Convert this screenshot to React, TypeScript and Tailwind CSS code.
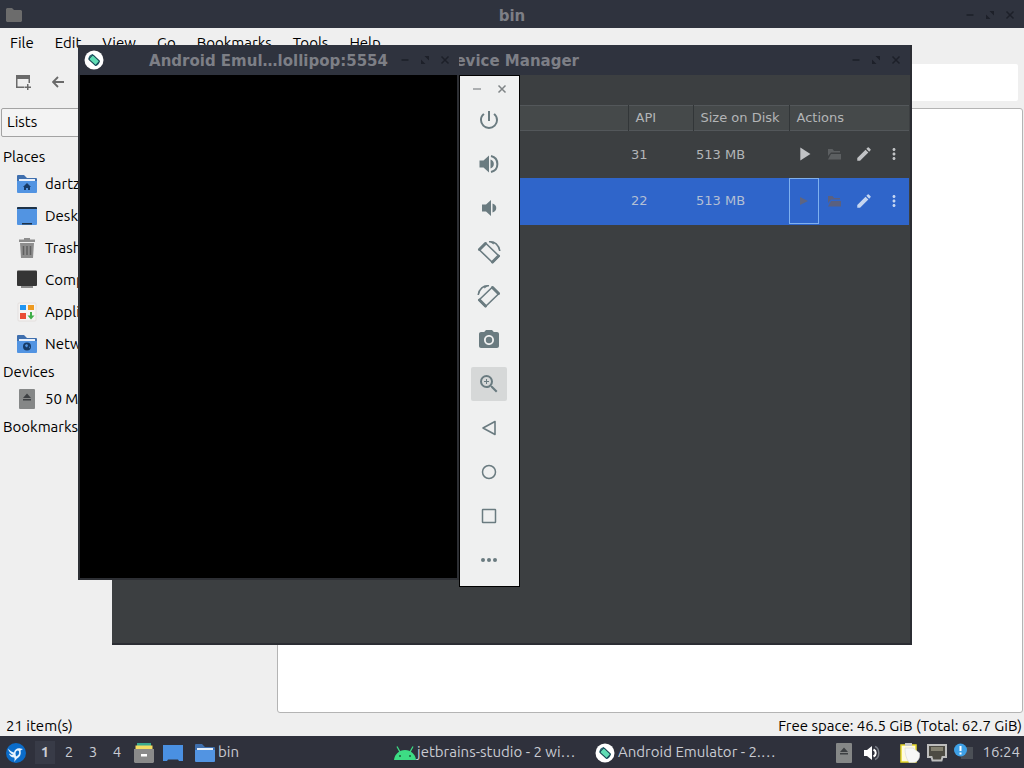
import type { ReactNode } from 'react'
import clsx from 'clsx'
import { MdPowerSettingsNew, MdPhotoCamera, MdZoomIn, MdEdit, MdMoreVert, MdPlayArrow } from 'react-icons/md'

const uiFont = "font-['Ubuntu','Noto_Sans',sans-serif]"
const dejavu = "font-['DejaVu_Sans',sans-serif]"

const menus = ['File', 'Edit', 'View', 'Go', 'Bookmarks', 'Tools', 'Help']

const devices = [
  { api: '31', size: '513 MB', selected: false },
  { api: '22', size: '513 MB', selected: true },
]

function WindowControls() {
  const button = 'flex h-5 w-5 items-center justify-center'
  return (
    <div className="flex items-center justify-end pr-1 text-[#1d2029]">
      <button aria-label="Minimize" className={button}>
        <svg viewBox="0 0 10 10" className="h-2.5 w-2.5" stroke="currentColor" strokeWidth="1.5">
          <path d="M1.500 5h7" />
        </svg>
      </button>
      <button aria-label="Maximize" className={button}>
        <svg viewBox="0 0 10 10" className="h-2.5 w-2.5" fill="currentColor">
          <path d="M4.500 1H9v4.500zM1 4.500L5.500 9H1z" />
        </svg>
      </button>
      <button aria-label="Close" className={button}>
        <svg viewBox="0 0 10 10" className="h-2.5 w-2.5" stroke="currentColor" strokeWidth="1.500">
          <path d="M1.500 1.500l7 7M8.500 1.500l-7 7" />
        </svg>
      </button>
    </div>
  )
}

function TitleBar({ title, icon, className }: { title: string; icon?: ReactNode; className?: string }) {
  return (
    <header className={clsx('grid shrink-0 grid-cols-[64px_1fr_64px] items-center bg-[#2f333e]', className)}>
      <div className="flex items-center pl-1.5">{icon}</div>
      <h1 className={clsx('pt-0.5 text-center text-[15px] font-bold whitespace-nowrap text-[#7d7f86]', dejavu)}>{title}</h1>
      <WindowControls />
    </header>
  )
}

function EmulatorLogo({ className }: { className?: string }) {
  return (
    <svg viewBox="0 0 20 20" className={className}>
      <circle cx="10" cy="10" r="9.500" fill="#fff" />
      <path d="M5 9.500a5 5 0 0 1 4-5M15 10.500a5 5 0 0 1-4 5" fill="none" stroke="#2b6f7c" strokeWidth="1.200" />
      <rect x="5.500" y="7" width="9.500" height="6" rx="1" transform="rotate(43 10 10)" fill="#5fdcb4" stroke="#12404f" strokeWidth="1.100" />
    </svg>
  )
}

function FolderIcon({ className, children }: { className?: string; children?: ReactNode }) {
  return (
    <svg viewBox="0 0 20 20" className={className}>
      <path d="M0 2a1 1 0 0 1 1-1h6l3 3h9a1 1 0 0 1 1 1v5H0z" fill="#3f6fae" />
      <path d="M2 5h16v4H2z" fill="#e8f0fa" />
      <path d="M0 7h20v11a1 1 0 0 1-1 1H1a1 1 0 0 1-1-1z" fill="#5294e2" />
      {children}
    </svg>
  )
}

function HomeIcon() {
  return (
    <FolderIcon className="h-5 w-5">
      <path d="M10 9l4 4h-1v3h-2v-2H9v2H7v-3H6z" fill="#173b66" />
    </FolderIcon>
  )
}

function NetworkIcon() {
  return (
    <FolderIcon className="h-5 w-5">
      <circle cx="10" cy="12.500" r="4" fill="#173b66" />
      <path d="M8 11l2-1 1 1.500-1 2-1.500-1zM12 12.500l1 .5-1 1.500z" fill="#5294e2" />
    </FolderIcon>
  )
}

function DesktopIcon() {
  return (
    <svg viewBox="0 0 20 20" className="h-5 w-5">
      <rect y="1" width="20" height="18" rx="1" fill="#5294e2" />
      <path d="M0 3V2a1 1 0 0 1 1-1h18a1 1 0 0 1 1 1v1zM5 17h10v1.500H5z" fill="#1e3247" />
    </svg>
  )
}

function TrashIcon() {
  return (
    <svg viewBox="0 0 20 20" className="h-5 w-5">
      <path d="M7 0h6v1.500h5V4H2V1.500h5zM3 5h14l-1 15H4z" fill="#8d8d8d" />
      <path d="M6.500 8v9M10 8v9M13.500 8v9" stroke="#5f5f5f" strokeWidth="1.500" />
    </svg>
  )
}

function ComputerIcon() {
  return (
    <svg viewBox="0 0 20 20" className="h-5 w-5">
      <rect y="0.500" width="20" height="15.500" rx="1" fill="#353535" />
      <path d="M4 16h12v2H4z" fill="#8b8b8b" />
    </svg>
  )
}

function ApplicationsIcon() {
  return (
    <svg viewBox="0 0 20 20" className="h-5 w-5">
      <rect x="1" y="1" width="18" height="18" rx="1" fill="#f5f3f2" stroke="#e3dfde" />
      <path d="M3 3h6v5H3z" fill="#2196f3" />
      <path d="M11 3h6v5h-6z" fill="#ed9a21" />
      <path d="M3 11h6v6H3z" fill="#ea4b35" />
      <path d="M13 10h2v3.500h2.500L14 17.500 10.500 13.500H13z" fill="#3fae49" />
    </svg>
  )
}

function DriveIcon({ className }: { className?: string }) {
  return (
    <svg viewBox="0 0 16 20" className={className}>
      <rect width="16" height="20" rx="1" fill="#858787" />
      <path d="M8 4.500l4 4.500H4zM4 10h8v1.500H4z" fill="#3d4043" />
    </svg>
  )
}

const places = [
  { name: 'dartz', icon: <HomeIcon /> },
  { name: 'Desktop', icon: <DesktopIcon /> },
  { name: 'Trash', icon: <TrashIcon /> },
  { name: 'Computer', icon: <ComputerIcon /> },
  { name: 'Applications', icon: <ApplicationsIcon /> },
  { name: 'Network', icon: <NetworkIcon /> },
]

function PlaceRow({ name, icon }: { name: string; icon: ReactNode }) {
  return (
    <li>
      <button className="flex h-8 w-full items-center gap-2 pl-[17px]">
        <span className="flex w-5 justify-center">{icon}</span>
        {name}
      </button>
    </li>
  )
}

function FileManager() {
  return (
    <main className="flex min-h-0 flex-1 flex-col bg-[#efefef] text-[15px] text-black">
      <TitleBar
        title="bin"
        className="h-7 pt-0.5"
        icon={
          <svg viewBox="0 0 16 14" className="h-3.5 w-4" fill="#6c6c6c">
            <path d="M0 1l1-1h5l2 2h7l1 1v10l-1 1H1l-1-1z" />
          </svg>
        }
      />
      <nav className="flex h-[30px] shrink-0 items-center gap-px">
        {menus.map((menu) => (
          <button key={menu} className="px-2.5">
            {menu}
          </button>
        ))}
      </nav>
      <div className="flex h-[50px] shrink-0 items-center gap-3 pr-1.5 pb-0.5 pl-3 text-[#6a6a6a]">
        <button aria-label="New tab" className="flex h-6 w-6 items-center justify-center">
          <svg viewBox="0 0 16 16" className="h-4 w-4" fill="currentColor">
            <path d="M0 1h14v8h-1.500V5h-11v7.500H8V14H0zM11 10h1.500v2.500H15V14h-2.500v2.500H11V14H8.500v-1.500H11z" />
          </svg>
        </button>
        <button aria-label="Back" className="flex h-5 w-5 items-center justify-center">
          <svg viewBox="0 0 12 12" className="h-3 w-3" fill="none" stroke="currentColor" strokeWidth="1.800">
            <path d="M12 6H1.500M6 1L1 6l5 5" />
          </svg>
        </button>
        <input aria-label="Path" className="ml-10 h-[37px] min-w-0 flex-1 rounded-xs bg-white px-2" />
      </div>
      <div className="flex min-h-0 flex-1">
        <aside className="w-[277px] shrink-0">
          <select
            aria-label="Side pane mode"
            className="ml-px block h-[29px] w-[272px] appearance-none rounded-xs border border-[#a3a3a3] bg-[#f3f3f3] px-[5px]"
          >
            <option>Lists</option>
          </select>
          <h2 className="mt-2 h-[23px] pl-[3px] leading-[23px]">Places</h2>
          <ul>
            {places.map((place) => (
              <PlaceRow key={place.name} {...place} />
            ))}
          </ul>
          <h2 className="h-[23px] pl-[3px] leading-[23px]">Devices</h2>
          <ul>
            <PlaceRow name="50 MB Volume" icon={<DriveIcon className="h-5 w-4" />} />
          </ul>
          <h2 className="h-[23px] pl-[3px] leading-[23px]">Bookmarks</h2>
        </aside>
        <section aria-label="Files" className="mr-px flex-1 rounded-[3px] border border-[#b4b4b4] bg-white" />
      </div>
      <footer className="flex h-[23px] shrink-0 items-center justify-between pt-1 pr-0.5 pl-1.5">
        <span>21 item(s)</span>
        <span>Free space: 46.5 GiB (Total: 62.7 GiB)</span>
      </footer>
    </main>
  )
}

function DeviceRow({ api, size, selected }: (typeof devices)[number]) {
  const action = 'flex h-[46px] w-[30px] items-center justify-center'
  return (
    <tr className={clsx('h-[47px]', selected ? 'bg-[#2f65ca] text-[#b3bfd4]' : 'text-[#b3b5b7]')}>
      <td />
      <td className="pl-[3px]">{api}</td>
      <td className="pl-[3px]">{size}</td>
      <td>
        <div className={clsx('flex', selected ? 'text-[#c5d5f0]' : 'text-[#c1c3c5]')}>
          <button aria-label="Launch" className={clsx(action, selected && 'border border-[#7fb0ee] text-[#5d6482]')}>
            {selected ? (
              <svg viewBox="0 0 10 10" className="h-2.5 w-2.5" fill="currentColor">
                <path d="M1 1l8 4-8 4z" />
              </svg>
            ) : (
              <MdPlayArrow className="h-[22px] w-[22px]" />
            )}
          </button>
          <button aria-label="Show files" className={clsx(action, selected ? 'text-[#5a6080]' : 'text-[#5c5f61]')}>
            <svg viewBox="0 0 14 12" className="h-3 w-3.5" fill="currentColor">
              <path d="M1 1h4.500L7 3h6v1.500H4L1 8zM4 6h10v5.500H1z" />
            </svg>
          </button>
          <button aria-label="Edit" className={action}>
            <MdEdit className="h-[18px] w-[18px]" />
          </button>
          <button aria-label="More" className={action}>
            <MdMoreVert className="h-[18px] w-[18px]" />
          </button>
        </div>
      </td>
    </tr>
  )
}

function DeviceManager() {
  const head = 'border-l border-[#323638] pl-[7px] text-left font-normal whitespace-nowrap'
  return (
    <section className="absolute top-[45px] left-28 flex h-[600px] w-[800px] flex-col border-r-2 border-b-2 border-[#2b2d33] bg-[#3c3f41]">
      <TitleBar title="Device Manager" className="h-[30px]" />
      <div className={clsx('mx-px mt-[30px] text-[13px]', dejavu)}>
        <table className="w-full table-fixed border-collapse">
          <colgroup>
            <col />
            <col className="w-[65px]" />
            <col className="w-24" />
            <col className="w-[120px]" />
          </colgroup>
          <thead>
            <tr className="h-[25px] border-y border-[#53575a] bg-[#45494a] text-[#b3b5b7]">
              <th />
              <th className={head}>API</th>
              <th className={head}>Size on Disk</th>
              <th className={head}>Actions</th>
            </tr>
          </thead>
          <tbody>
            {devices.map((device) => (
              <DeviceRow key={device.api} {...device} />
            ))}
          </tbody>
        </table>
      </div>
    </section>
  )
}

function RotateIcon({ className }: { className?: string }) {
  return (
    <svg viewBox="0 0 24 24" className={className} fill="none" stroke="currentColor">
      <path d="M8.500 3L2 9.500 15.500 22.500 22 16z" strokeWidth="1.600" strokeLinejoin="round" />
      <path d="M8.500 3.500L2.500 9.500M15.500 22L21.500 16" strokeWidth="3" strokeLinecap="round" />
      <path d="M12 1.800C17.500 1 22 5 22.800 11" strokeWidth="1.600" />
      <path d="M12 1.200l4.500 3.300.8-2.500z" fill="currentColor" stroke="none" />
    </svg>
  )
}

const emulatorActions = [
  { label: 'Power', icon: <MdPowerSettingsNew className="h-6 w-6" /> },
  {
    label: 'Volume up',
    icon: (
      <svg viewBox="0 0 20 20" className="h-5 w-5" fill="currentColor">
        <path d="M.5 6.500h4L10 1.500v17l-5.500-5H.5zM11.500 5.500c4.500 1.500 4.500 7.500 0 9z" />
        <path d="M12 2c8.500 2 8.500 14 0 16" fill="none" stroke="currentColor" strokeWidth="2" />
      </svg>
    ),
  },
  {
    label: 'Volume down',
    icon: (
      <svg viewBox="0 0 20 20" className="h-5 w-5" fill="currentColor">
        <path d="M3 6.500h4L12 2v16l-5-4.500H3zM13.500 5.500c5 1.500 5 7.500 0 9z" />
      </svg>
    ),
  },
  { label: 'Rotate left', icon: <RotateIcon className="h-6 w-6" /> },
  { label: 'Rotate right', icon: <RotateIcon className="h-6 w-6 -scale-x-100" /> },
  { label: 'Take screenshot', icon: <MdPhotoCamera className="h-6 w-6" /> },
  { label: 'Zoom', icon: <MdZoomIn className="h-6 w-6" />, active: true },
  {
    label: 'Back',
    icon: (
      <svg viewBox="0 0 16 16" className="h-4 w-4" fill="none" stroke="currentColor" strokeWidth="1.600" strokeLinejoin="round">
        <path d="M14 1.500v13L2 8z" />
      </svg>
    ),
  },
  {
    label: 'Home',
    icon: (
      <svg viewBox="0 0 16 16" className="h-4 w-4" fill="none" stroke="currentColor" strokeWidth="1.500">
        <circle cx="8" cy="8" r="6.500" />
      </svg>
    ),
  },
  {
    label: 'Overview',
    icon: (
      <svg viewBox="0 0 16 16" className="h-4 w-4" fill="none" stroke="currentColor" strokeWidth="1.500">
        <rect x="1.500" y="1.500" width="13" height="13" rx="0.500" />
      </svg>
    ),
  },
  {
    label: 'Extended controls',
    icon: (
      <svg viewBox="0 0 16 16" className="h-4 w-4" fill="currentColor">
        <circle cx="2" cy="8" r="2" />
        <circle cx="8" cy="8" r="2" />
        <circle cx="14" cy="8" r="2" />
      </svg>
    ),
  },
]

function Emulator() {
  return (
    <>
      <section className="absolute top-[45px] left-[78px] flex h-[535px] w-[381px] flex-col bg-[#2d2f34]">
        <TitleBar title="Android Emul…lollipop:5554" className="h-[30px]" icon={<EmulatorLogo className="h-5 w-5" />} />
        <div className="mx-0.5 mb-0.5 flex-1 bg-black" />
      </section>
      <aside className="absolute top-[75px] left-[459px] w-[61px] border border-black bg-[#eff0f0] text-[#6a7b80]">
        <div className="flex h-[26px] items-center justify-center gap-[15px] text-[#7f8486]">
          <button aria-label="Minimize toolbar">
            <svg viewBox="0 0 10 10" className="h-2.5 w-2.5" stroke="currentColor" strokeWidth="1.200">
              <path d="M1 5h8" />
            </svg>
          </button>
          <button aria-label="Close emulator">
            <svg viewBox="0 0 10 10" className="h-2.5 w-2.5" stroke="currentColor" strokeWidth="1.500">
              <path d="M1.500 1.500l7 7M8.500 1.500l-7 7" />
            </svg>
          </button>
        </div>
        <div className="flex flex-col items-center gap-2.5 pt-px pr-px pb-[9px]">
          {emulatorActions.map(({ label, icon, active }) => (
            <button
              key={label}
              aria-label={label}
              className={clsx('flex h-[34px] w-9 items-center justify-center rounded-xs', active && 'bg-[#d6d8d8]')}
            >
              {icon}
            </button>
          ))}
        </div>
      </aside>
    </>
  )
}

function Taskbar() {
  return (
    <footer className="flex h-8 shrink-0 items-center bg-[#2f313c] pt-px text-[15px] text-[#c9cbd2]">
      <button aria-label="Menu" className="ml-1.5 shrink-0">
        <svg viewBox="0 0 20 20" className="h-5 w-5">
          <circle cx="10" cy="10" r="10" fill="#0b6cc9" />
          <path
            d="M2 5.500c2 2.500 4 3.500 6 4 .5-3 3.500-5 6.500-4l2.500.5-2.500 1.500c1 4.500-1 6.500-3.500 8L8 19c.8-2 .8-3 .2-4.500C5 14.500 3.500 12.500 3 10.500c1.500 1 3 1.500 4.500 1.500C4.500 10.500 2.500 8.500 2 5.500z"
            fill="#e9f3fd"
          />
          <path d="M9.500 10.500c0-3 3-4 3.500-2s-.5 4-3 5z" fill="#0b6cc9" />
        </svg>
      </button>
      <nav aria-label="Desktops" className="ml-[7px] flex shrink-0">
        {['1', '2', '3', '4'].map((desk) => (
          <button key={desk} className="flex h-6 w-6 items-center justify-center">
            <span className={clsx('w-5', desk === '1' && 'bg-[#383b47] font-bold')}>{desk}</span>
          </button>
        ))}
      </nav>
      <div className="ml-[5px] flex shrink-0 gap-[9px]">
        <button aria-label="Files">
          <svg viewBox="0 0 20 20" className="h-5 w-5">
            <path d="M3 0h14v4H3z" fill="#3aa98f" />
            <path d="M1.500 2.500h17V8h-17z" fill="#f2dc62" />
            <path d="M0 6h20v13l-1 1H1l-1-1z" fill="#8a8a8a" />
            <path d="M7 11h6v2.500H7z" fill="#fff" />
          </svg>
        </button>
        <button aria-label="Show desktop">
          <svg viewBox="0 0 20 20" className="h-5 w-5">
            <path d="M0 2h20v16h-4l-1-1.500H5L4 18H0z" fill="#4a90e2" />
          </svg>
        </button>
      </div>
      <div className="ml-3 flex min-w-0 flex-1">
        <button className="flex w-[199px] items-center gap-[3px] text-left">
          <FolderIcon className="h-5 w-5 shrink-0" />
          bin
        </button>
        <button className="flex w-[201px] items-center gap-px text-left whitespace-nowrap">
          <svg viewBox="0 0 22 14" className="h-3.5 w-[22px] shrink-0">
            <path d="M0 14C.5 8.500 5 4 11 4s10.500 4.500 11 10z" fill="#3ddc84" />
            <path d="M6 6L3 .5M16 6l3-5.500" stroke="#3ddc84" strokeWidth="1.300" />
            <circle cx="6" cy="10" r="1" fill="#1d5c3a" />
            <circle cx="16" cy="10" r="1" fill="#1d5c3a" />
          </svg>
          jetbrains-studio - 2 wi…
        </button>
        <button className="flex items-center gap-[3px] text-left whitespace-nowrap">
          <EmulatorLogo className="h-5 w-5 shrink-0" />
          Android Emulator - 2.…
        </button>
      </div>
      <div className="flex shrink-0 items-center pr-1">
        <button aria-label="Removable media" className="mr-3">
          <DriveIcon className="h-5 w-4" />
        </button>
        <button aria-label="Volume" className="mr-5">
          <svg viewBox="0 0 16 16" className="h-4 w-4">
            <path d="M0 5h3l5-4v14l-5-4H0z" fill="#fff" />
            <path d="M9.500 4.500c3 1.500 3 5.500 0 7" fill="none" stroke="#fff" strokeWidth="2" />
            <path d="M11 1.500c5 2 5 11 0 13" fill="none" stroke="#777b84" strokeWidth="1.500" />
          </svg>
        </button>
        <button aria-label="Clipboard" className="mr-[7px]">
          <svg viewBox="0 0 20 20" className="h-5 w-5">
            <path d="M1 2h15v17H1z" fill="#fffbe0" stroke="#e8d92a" strokeWidth="1.500" />
            <path d="M5 0h7v3H5z" fill="#c9c9c9" />
            <path d="M5 5h8l6.500 5c1 5-2 9.500-6 9.500H9C6 15 5 11 5 5z" fill="#f7f7f7" stroke="#d5d5d5" strokeWidth=".6" />
          </svg>
        </button>
        <button aria-label="Network" className="mr-[7px]">
          <svg viewBox="0 0 20 18" className="h-[18px] w-5">
            <path d="M1 1h18v12h-3.500l-1 3.500h-9l-1-3.500H1z" fill="#4d4b43" stroke="#bdbdbd" strokeWidth="2" />
            <path d="M5 3v4M7 3v4M9 3v4M11 3v4M13 3v4M15 3v4" stroke="#d8d3b8" strokeWidth=".8" />
          </svg>
        </button>
        <button aria-label="Notifications" className="mr-2">
          <svg viewBox="0 0 20 20" className="h-5 w-5">
            <path d="M7 4h12v12H7z" fill="#4b4f56" />
            <circle cx="6.500" cy="7" r="6.500" fill="#3ea0e6" />
            <path d="M6.500 3v5M6.500 9.500v2" stroke="#fff" strokeWidth="2" />
          </svg>
        </button>
        <time>16:24</time>
      </div>
    </footer>
  )
}

export default function App() {
  return (
    <div className={clsx('relative flex h-screen flex-col overflow-hidden', uiFont)}>
      <FileManager />
      <DeviceManager />
      <Emulator />
      <Taskbar />
    </div>
  )
}
